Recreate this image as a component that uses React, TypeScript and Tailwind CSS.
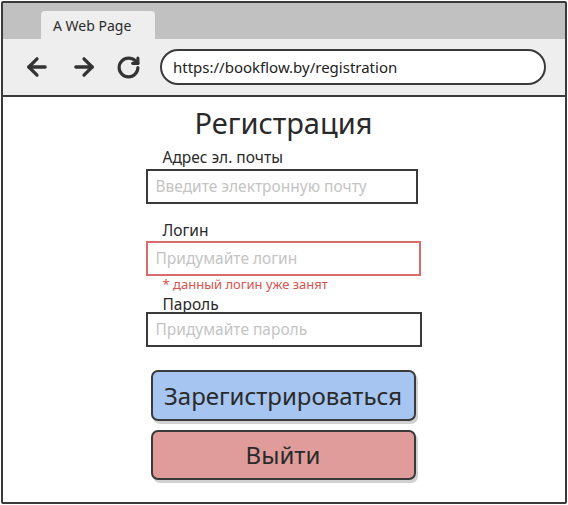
import { ArrowLeft, ArrowRight, RotateCw } from "lucide-react"

const font = { fontFamily: '"Noto Sans", "Open Sans", sans-serif' }

export default function App() {
  return (
    <div className="w-[568px] h-[505px] bg-white p-[1px]" style={font}>
      <div className="h-[503px] border-2 border-[#3a3a3a] rounded-[2px] flex flex-col overflow-hidden">
        {/* Tab strip */}
        <div className="h-[36px] bg-[#c1c1c1] flex items-end pl-[38px] shrink-0">
          <div className="w-[114px] h-[28px] bg-[#eeeeee] rounded-t-[4px] flex items-center pl-[12px] text-[14px] text-[#2c2c2c]">
            A Web Page
          </div>
        </div>

        {/* Toolbar */}
        <div className="h-[58px] bg-[#eeeeee] border-b-2 border-[#3a3a3a] flex items-center pl-[20px] pr-[19px] shrink-0">
          <ArrowLeft className="w-[28px] h-[28px] text-[#333]" strokeWidth={2.8} />
          <ArrowRight className="w-[28px] h-[28px] text-[#333] ml-[19px]" strokeWidth={2.8} />
          <RotateCw className="w-[25px] h-[25px] text-[#333] ml-[18px]" strokeWidth={3} />
          <div className="ml-[19px] flex-1 h-[36px] bg-white border-2 border-[#3a3a3a] rounded-full flex items-center pl-[11px] text-[15px] text-[#222]">
            https://bookflow.by/registration
          </div>
        </div>

        {/* Form */}
        <div className="flex-1 flex flex-col items-center">
          <div className="w-[276px] -ml-[1px] flex flex-col">
            <h1 className="text-[29px] leading-[34px] text-[#2a2a2a] text-center mt-[9px]">Регистрация</h1>

            <label className="pl-[17px] text-[15.5px] leading-[20px] text-[#2a2a2a] mt-[7px]">Адрес эл. почты</label>
            <div className="mt-[2px] w-[272px] h-[35px] border-2 border-[#3a3a3a] flex items-center pl-[8px] text-[15.5px] text-[#c4c4c4]">
              Введите электронную почту
            </div>

            <label className="pl-[17px] text-[15.5px] leading-[20px] text-[#2a2a2a] mt-[16px]">Логин</label>
            <div className="mt-[1px] w-[275px] h-[35px] border-2 border-[#d96b6b] flex items-center pl-[8px] text-[15.5px] text-[#c4c4c4]">
              Придумайте логин
            </div>
            <p className="pl-[17px] text-[13px] leading-[15px] text-[#d9534f] mt-[1px]">* данный логин уже занят</p>

            <label className="pl-[17px] text-[15.5px] leading-[20px] text-[#2a2a2a] mt-[2px]">Пароль</label>
            <div className="mt-[-2px] w-[276px] h-[35px] border-2 border-[#3a3a3a] flex items-center pl-[8px] text-[15.5px] text-[#c4c4c4]">
              Придумайте пароль
            </div>

            <button className="mt-[23px] ml-[5px] w-[265px] h-[51px] bg-[#a6c5f1] border-2 border-[#3a3a3a] rounded-[7px] shadow-[2px_3px_0_rgba(0,0,0,0.18)] text-[24px] text-[#2a2a2a]">
              Зарегистрироваться
            </button>
            <button className="mt-[9px] ml-[5px] w-[265px] h-[50px] bg-[#df9c9b] border-2 border-[#3a3a3a] rounded-[7px] shadow-[2px_3px_0_rgba(0,0,0,0.18)] text-[24px] text-[#2a2a2a]">
              Выйти
            </button>
          </div>
        </div>
      </div>
    </div>
  )
}
